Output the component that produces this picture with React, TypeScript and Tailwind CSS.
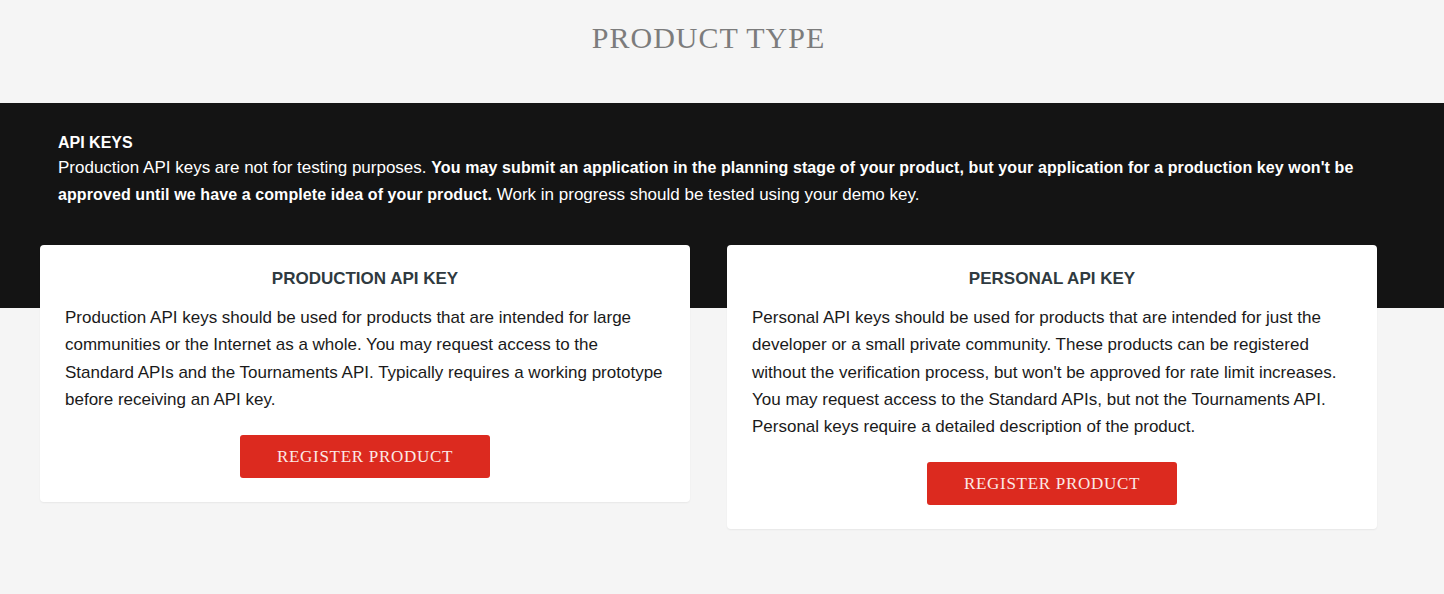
const cards = [
  {
    title: 'Production API Key',
    body: 'Production API keys should be used for products that are intended for large communities or the Internet as a whole. You may request access to the Standard APIs and the Tournaments API. Typically requires a working prototype before receiving an API key.',
  },
  {
    title: 'Personal API Key',
    body: "Personal API keys should be used for products that are intended for just the developer or a small private community. These products can be registered without the verification process, but won't be approved for rate limit increases. You may request access to the Standard APIs, but not the Tournaments API. Personal keys require a detailed description of the product.",
  },
];

export default function App() {
  return (
    <div className="min-h-[594px] bg-[#f5f5f5] font-['Liberation_Sans',sans-serif]">
      {/* page content is centred in 1417px, the band runs full width */}
      <div className="h-[103px] w-[1417px] flex justify-center pt-[21px]">
        <h1 className="font-['Liberation_Serif',serif] text-[30px] leading-[34px] tracking-[1px] text-[#7c7c7c] uppercase">
          Product Type
        </h1>
      </div>

      <div className="bg-[#141414] px-[58px] pt-[29px] pb-[37px] text-white">
        <h2 className="text-[16px] font-bold leading-[22px]">API KEYS</h2>
        <p className="text-[17px] leading-[27px] max-w-[1320px]">
          Production API keys are not for testing purposes.{' '}
          <strong className="font-bold text-[16px] tracking-[0.1px]">
            You may submit an application in the planning stage of your product, but your application for a production key won't be approved until we have a complete idea of your product.
          </strong>{' '}
          Work in progress should be tested using your demo key.
        </p>
      </div>

      <div className="flex items-start gap-[37px] px-[40px] bg-[linear-gradient(to_bottom,#141414_63px,#f5f5f5_63px)]">
        {cards.map((card) => (
          <div key={card.title} className="w-[650px] bg-white rounded-[4px] shadow-[0_1px_2px_rgba(0,0,0,0.06)] px-[25px] pt-[23px] pb-[24px] flex flex-col">
            <h3 className="text-center uppercase font-bold text-[17px] leading-[22px] text-[#2f3a40]">
              {card.title}
            </h3>
            <p className="mt-[14px] text-[17px] leading-[27.3px] text-[#1a1a1a]">{card.body}</p>
            <button className="mt-[22px] self-center w-[250px] h-[43px] rounded-[3px] bg-[#dc2a1f] text-[#fbe9e6] font-['Liberation_Serif',serif] text-[17px] tracking-[0.7px] uppercase">
              Register Product
            </button>
          </div>
        ))}
      </div>
    </div>
  );
}
